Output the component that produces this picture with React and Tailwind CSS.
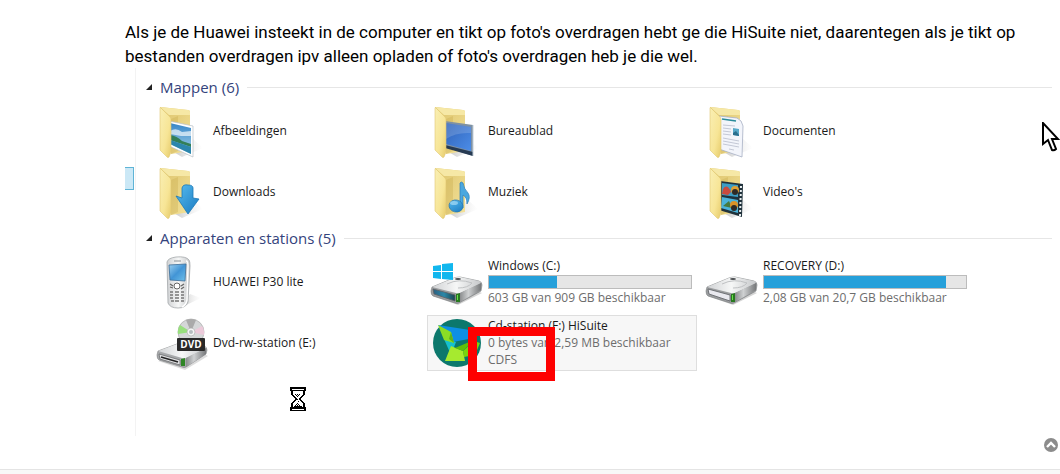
import React, { useState } from "react";

const folders = [
  { name: "Afbeeldingen", icon: PicturesIcon },
  { name: "Bureaublad", icon: DesktopIcon },
  { name: "Documenten", icon: DocumentsIcon },
  { name: "Downloads", icon: DownloadsIcon },
  { name: "Muziek", icon: MusicIcon },
  { name: "Video's", icon: VideosIcon },
];

const devices = [
  { name: "HUAWEI P30 lite", icon: PhoneIcon },
  {
    name: "Windows (C:)",
    icon: WindowsDriveIcon,
    info: "603 GB van 909 GB beschikbaar",
    free: 603,
    size: 909,
  },
  {
    name: "RECOVERY (D:)",
    icon: DriveIcon,
    info: "2,08 GB van 20,7 GB beschikbaar",
    free: 2.08,
    size: 20.7,
  },
  { name: "Dvd-rw-station (E:)", icon: DvdIcon },
  {
    name: "Cd-station (F:) HiSuite",
    icon: HiSuiteIcon,
    info: "0 bytes van 2,59 MB beschikbaar",
    fs: "CDFS",
    selected: true,
  },
];

function Icon({ children }) {
  return (
    <svg viewBox="0 0 56 56" className="h-14 w-14 shrink-0" aria-hidden="true">
      {children}
    </svg>
  );
}

function Folder({ children }) {
  return (
    <Icon>
      <path d="M30 54 L51 45 L41 36 L20 48Z" fill="url(#shadow)" />
      <path d="M8 4 L36 7 Q38 7 38 9 V48 L19 51Z" fill="url(#folderBack)" />
      <path d="M8 4 L36 7 Q38 7 38 9 V12 L17 12Z" fill="#f6e8a6" />
      <path d="M19 16 L26 13 V48 L19 51Z" fill="#c9ab4c" opacity="0.35" />
      {children}
      <path
        d="M8 5 Q8 4 9 5 L18 14 Q19 15 19 17 V49 L17 54 Q16 55 15 54 L8 47Z"
        fill="url(#folderFront)"
        stroke="#e0c873"
        strokeWidth="0.6"
      />
    </Icon>
  );
}

function PicturesIcon() {
  return (
    <Folder>
      <path d="M17 18 L41 23 V54 L17 43Z" fill="#fff" stroke="#b9c0c6" strokeWidth="0.7" />
      <path d="M18 20 L39 25 V51 L18 41Z" fill="url(#photo)" />
      <path d="M18 28 Q24 24 30 29 L39 28 V33 L29 33 L18 31Z" fill="#fff" opacity="0.65" />
      <path d="M18 32 Q25 33 30 38 L39 41 V44 L18 37Z" fill="#337f58" />
      <path d="M18 37 L39 44 V51 L18 41Z" fill="#2c86ad" />
    </Folder>
  );
}

function DesktopIcon() {
  return (
    <Folder>
      <path d="M18 18 L46 22 V53 L18 44Z" fill="#7f91a3" />
      <path d="M18 42 L46 49 V53 L18 45Z" fill="#263a52" />
      <path d="M19 20 L44 24 V48 L19 41Z" fill="url(#screen)" />
      <path d="M19 20 L44 24 V30 Q29 29 19 36Z" fill="#fff" opacity="0.16" />
      <path d="M46 22 V53" stroke="#c3ced8" strokeWidth="1" />
    </Folder>
  );
}

function DocumentsIcon() {
  return (
    <Folder>
      <path
        d="M17 13 L35 15 Q40 17 41 23 L40 54 L17 46Z"
        fill="#f3f5fb"
        stroke="#a7b0c4"
        strokeWidth="0.8"
      />
      <path d="M20 16 L34 18" stroke="#2b8b9b" strokeWidth="1.4" />
      <path d="M31 25 L37 26 V33 L31 32Z" fill="#58a9c9" />
      <path d="M31 30 L34 28 L37 32 V33 L31 32Z" fill="#2a6f8e" />
      <path
        d="M21 22 L33 23 M21 25 L29 26 M21 28 L29 29 M21 31 L29 32 M21 35 L37 38 M21 38 L37 41 M21 41 L37 44 M27 46 L32 47"
        stroke="#b7bccb"
        strokeWidth="0.8"
      />
    </Folder>
  );
}

function DownloadsIcon() {
  return (
    <Folder>
      <path
        d="M30 24 Q31 20 36 21 Q41 21 41 24 L41 34 L47 35 L36 50 L24 32 L30 34Z"
        fill="url(#arrow)"
        stroke="#1b78b7"
        strokeWidth="0.8"
      />
    </Folder>
  );
}

function MusicIcon() {
  return (
    <Folder>
      <path
        d="M33 19 Q34 17 36 19 Q37 25 41 29 Q44 33 40 40 Q40 33 36 31 L36 44 L33 42Z"
        fill="#4aa7df"
        stroke="#2b7db8"
        strokeWidth="0.7"
      />
      <ellipse
        cx="29"
        cy="42"
        rx="7"
        ry="6"
        transform="rotate(12 29 42)"
        fill="url(#arrow)"
        stroke="#2676b1"
        strokeWidth="0.7"
      />
      <ellipse cx="27" cy="39" rx="4" ry="2" fill="#b5e2f8" opacity="0.6" />
    </Folder>
  );
}

function VideosIcon() {
  return (
    <Folder>
      <path d="M18 17 L41 20 L40 53 L17 46Z" fill="#20323c" />
      <path d="M20 19 L36 21 V33 L20 31Z" fill="#3c9dc4" />
      <path d="M20 33 L36 36 V49 L19 44Z" fill="#4bb3da" />
      <path d="M21 25 Q25 19 29 28 L26 31 L20 30Z" fill="#c94a3e" />
      <circle cx="33" cy="26" r="4" fill="#e0a032" />
      <circle cx="33" cy="28" r="3" fill="#2e2a26" />
      <path d="M21 42 L27 37 L30 44Z" fill="#477a3d" />
      <circle cx="32" cy="41" r="4" fill="#db9328" />
      <circle cx="32" cy="44" r="3" fill="#2e2a26" />
      <path d="M39 22 L38 52" stroke="#e8eef0" strokeWidth="2" strokeDasharray="2 2" />
    </Folder>
  );
}

function PhoneIcon() {
  return (
    <Icon>
      <path d="M28 54 L49 44 L38 40Z" fill="url(#shadow)" />
      <path
        d="M15 8 Q16 4 24 3 Q34 2 37 6 Q38 7 38 12 L36 48 Q34 54 26 54 Q18 54 16 49Z"
        fill="url(#metal)"
        stroke="#a5a8ab"
        strokeWidth="0.8"
      />
      <path d="M34 7 Q36 7 36 12 L35 46 Q34 51 30 53" fill="none" stroke="#fff" strokeWidth="1.4" />
      <path d="M22 7 H29" stroke="#8e9497" strokeWidth="1" />
      <path d="M17 11 L34 10 L33 27 L18 26Z" fill="url(#photoScreen)" stroke="#3d6d98" strokeWidth="0.8" />
      <circle cx="25" cy="32" r="3" fill="#fff" stroke="#666" />
      <path d="M18 30 L21 32 M18 33 L21 34 M29 32 L32 30 M29 35 L32 33" stroke="#666" strokeWidth="1.3" />
      <path
        d="M18 38 H21 M23 38 H27 M29 38 H32 M18 41 H21 M23 41 H27 M29 41 H32 M18 44 H21 M23 44 H27 M29 44 H32 M19 47 H22 M23 47 H27 M29 47 H32"
        stroke="#777"
        strokeWidth="1.6"
      />
    </Icon>
  );
}

function DriveBody({ front = "#e9e9ef" }) {
  return (
    <>
      <path d="M6 42 L31 51 L55 39 L50 37Z" fill="#555" opacity="0.25" />
      <path
        d="M5 33 L27 24 Q30 23 33 23 L52 27 Q55 28 55 31 L54 37 L32 49 Q30 50 28 49 L6 42 Q4 41 4 37Z"
        fill="#9b9d9f"
        stroke="#7b7d7f"
        strokeWidth="0.6"
      />
      <path d="M5 33 L27 24 Q30 23 33 23 L52 27 Q55 28 53 30 L33 39 Q31 40 29 39Z" fill="url(#metal)" />
      <path d="M33 39 L54 29 L54 36 L33 48Z" fill="url(#side)" />
      <path d="M20 30 Q32 24 45 29 Q41 34 31 34" fill="none" stroke="#bfc1c3" strokeWidth="1" />
      <ellipse cx="31" cy="25" rx="3" ry="1" fill="#4c4f52" />
      <path d="M6 35 L28 41 V47 L7 40Z" fill={front} stroke="#5c6063" strokeWidth="0.8" />
      <path d="M29 40 L33 39 V48 L29 48Z" fill="#287a20" />
      <path d="M30 41 L31 41 V46 L30 46Z" fill="#68e04b" />
    </>
  );
}

function DriveIcon() {
  return (
    <Icon>
      <DriveBody />
    </Icon>
  );
}

function WindowsDriveIcon() {
  return (
    <Icon>
      <DriveBody front="url(#driveFront)" />
      <path d="M6 12 L14 11 V17 H6Z M15 10 L26 9 V17 H15Z M6 18 H14 V25 L6 24Z M15 18 H26 V26 L15 25Z" fill="#12b7ee" />
    </Icon>
  );
}

function DvdIcon() {
  return (
    <Icon>
      <path d="M6 46 L33 55 L56 41 L50 38Z" fill="#555" opacity="0.2" />
      <path
        d="M6 36 L25 29 L52 31 Q55 32 55 35 L54 39 L34 52 Q32 53 30 52 L7 45 Q5 44 5 40Z"
        fill="#a7a9ab"
        stroke="#7e8082"
        strokeWidth="0.6"
      />
      <path d="M6 36 L25 29 L52 31 Q55 32 53 34 L34 43 Q32 44 30 43Z" fill="url(#metal)" />
      <path d="M34 43 L54 33 L54 39 L34 52Z" fill="url(#side)" />
      <path d="M7 39 L28 45 V50 L8 44Z" fill="#e1e2e4" stroke="#5e6062" strokeWidth="0.7" />
      <path d="M9 42 L26 47" stroke="#222" strokeWidth="1.6" />
      <path d="M29 44 L33 43 V51 L29 51Z" fill="#2e8525" />
      <circle cx="39" cy="17" r="13" fill="#d5d7d8" stroke="#aaa" strokeWidth="0.7" />
      <path d="M39 17 L28 10 A13 13 0 0 0 26 19Z" fill="#98df7e" />
      <path d="M39 17 L34 5 A13 13 0 0 1 44 5Z" fill="#aaa" />
      <path d="M39 17 L50 11 A13 13 0 0 1 52 20Z" fill="#eccada" />
      <circle cx="39" cy="17" r="4" fill="#f4f5f5" stroke="#aaa" strokeWidth="0.6" />
      <circle cx="39" cy="17" r="2" fill="#b5bdc0" />
      <rect x="25" y="23" width="28" height="13" rx="1" fill="#292929" />
      <text
        x="39"
        y="33"
        textAnchor="middle"
        fill="#fff"
        fontFamily="Open Sans, sans-serif"
        fontSize="10"
        fontWeight="700"
      >
        DVD
      </text>
    </Icon>
  );
}

function HiSuiteIcon() {
  return (
    <Icon>
      <circle cx="30" cy="28" r="24" fill="#0c786c" />
      <path d="M11 10 L43 15 L47 23 L26 27Z" fill="#0d8fe4" />
      <path d="M17 24 L29 27 L24 40Z" fill="#15c0cf" />
      <path d="M11 10 L24 17 L27 28 L17 25Z" fill="#8bdd25" />
      <path d="M24 17 L27 28 L22 24Z" fill="#5fb319" />
      <path d="M24 31 L36 36 L38 46 L18 46Z" fill="#a6ea2f" />
      <path d="M36 36 L47 26 L53 28 L48 40 L37 42Z" fill="#78d40d" />
      <path d="M28 33 L47 25 L36 36Z" fill="#5fc008" />
    </Icon>
  );
}

// gradients shared by all icons
function IconDefs() {
  return (
    <svg width="0" height="0" className="absolute" aria-hidden="true">
      <defs>
        <linearGradient id="folderFront" x1="0" y1="0" x2="1" y2="1">
          <stop offset="0" stopColor="#f9efb4" />
          <stop offset="0.6" stopColor="#f7e596" />
          <stop offset="1" stopColor="#e6cb6b" />
        </linearGradient>
        <linearGradient id="folderBack" x1="0" y1="0" x2="1" y2="1">
          <stop offset="0" stopColor="#dcc36a" />
          <stop offset="1" stopColor="#f4e29a" />
        </linearGradient>
        <linearGradient id="shadow" x1="0" y1="0" x2="1" y2="0">
          <stop offset="0" stopColor="#888" stopOpacity="0.5" />
          <stop offset="1" stopColor="#ccc" stopOpacity="0" />
        </linearGradient>
        <linearGradient id="photo" x1="0" y1="0" x2="0" y2="1">
          <stop offset="0" stopColor="#3585c8" />
          <stop offset="1" stopColor="#a8d5ea" />
        </linearGradient>
        <linearGradient id="photoScreen" x1="0" y1="0" x2="1" y2="1">
          <stop offset="0" stopColor="#9dd0f0" />
          <stop offset="0.5" stopColor="#4295d6" />
          <stop offset="1" stopColor="#6fc0ea" />
        </linearGradient>
        <linearGradient id="screen" x1="0" y1="0" x2="1" y2="1">
          <stop offset="0" stopColor="#2f62b8" />
          <stop offset="1" stopColor="#4c8de8" />
        </linearGradient>
        <linearGradient id="arrow" x1="0" y1="0" x2="1" y2="1">
          <stop offset="0" stopColor="#57bdf0" />
          <stop offset="1" stopColor="#1a79c0" />
        </linearGradient>
        <linearGradient id="metal" x1="0" y1="0" x2="1" y2="0">
          <stop offset="0" stopColor="#d0d2d4" />
          <stop offset="0.5" stopColor="#f6f7f7" />
          <stop offset="1" stopColor="#c6c8ca" />
        </linearGradient>
        <linearGradient id="side" x1="0" y1="0" x2="1" y2="0">
          <stop offset="0" stopColor="#8b8d8f" />
          <stop offset="0.4" stopColor="#cfd1d2" />
          <stop offset="1" stopColor="#77797b" />
        </linearGradient>
        <linearGradient id="driveFront" x1="0" y1="0" x2="1" y2="0">
          <stop offset="0" stopColor="#2c5f80" />
          <stop offset="0.5" stopColor="#2b88a8" />
          <stop offset="1" stopColor="#1c4650" />
        </linearGradient>
      </defs>
    </svg>
  );
}

function Item({ item }) {
  const ItemIcon = item.icon;
  const used = item.size ? ((item.size - item.free) / item.size) * 100 : 0;

  return (
    <li className="relative">
      <button
        type="button"
        className={
          item.selected
            ? "flex h-14 w-full items-center gap-[5px] bg-[#f7f7f7] text-left outline outline-1 -outline-offset-1 outline-[#dedede]"
            : "flex h-14 w-full items-center gap-[5px] text-left"
        }
      >
        <ItemIcon />
        <span className="flex min-w-0 flex-1 flex-col gap-px pr-[5px] text-[12px] leading-4 text-[#1a1a1a]">
          <span>{item.name}</span>
          {item.size && (
            <span className="block h-[14px] border border-[#bcbcbc] bg-[#e6e6e6]">
              <span className="block h-full bg-[#26a0da]" style={{ width: `${used}%` }} />
            </span>
          )}
          {item.info && <span className="text-[#6d6d6d]">{item.info}</span>}
          {item.fs && <span className="text-[#6d6d6d]">{item.fs}</span>}
        </span>
      </button>
      {item.selected && (
        <div className="pointer-events-none absolute top-3 left-[41px] h-[54px] w-[87px] border-[9px] border-[#fe0000]" />
      )}
    </li>
  );
}

function Group({ title, items }) {
  const [open, setOpen] = useState(true);

  return (
    <section>
      <h2 className="flex h-5 items-center gap-2">
        <button
          type="button"
          aria-expanded={open}
          onClick={() => setOpen(!open)}
          className="flex items-center gap-2 text-[15px] leading-5 text-[#34437c]"
        >
          <svg viewBox="0 0 6 6" className="h-[6px] w-[6px]" aria-hidden="true">
            <path d="M6 0 V6 H0Z" fill="#222" />
          </svg>
          {title} ({items.length})
        </button>
        <span className="h-px flex-1 bg-[#e6e6e6]" />
      </h2>
      {open && (
        <ul className="mt-[6px] grid grid-cols-[repeat(auto-fill,270px)] gap-[5px] pl-[6px]">
          {items.map((item) => (
            <Item key={item.name} item={item} />
          ))}
        </ul>
      )}
    </section>
  );
}

function Hourglass() {
  return (
    <svg
      viewBox="0 0 16 24"
      className="absolute top-[319px] left-[165px] h-6 w-4"
      shapeRendering="crispEdges"
      aria-hidden="true"
    >
      <path d="M2 3 H14 V7 L10 12 L14 17 V21 H2 V17 L6 12 L2 7Z" fill="#fff" stroke="#000" strokeWidth="1.5" />
      <path d="M0 0 H16 V4 H0Z M0 20 H16 V24 H0Z" fill="#000" />
      <path d="M2 2 H14 M2 22 H14" stroke="#fff" strokeWidth="1" />
      <path
        d="M5 7 H6 M7 7 H8 M9 7 H10 M6 8 H7 M8 8 H9 M7 9 H8 M7 12 H8 M8 14 H9 M7 16 H8 M6 17 H7 M8 17 H9 M5 18 H6 M7 18 H8 M9 18 H10 M4 19 H12"
        transform="translate(0 0.5)"
        stroke="#000"
        strokeWidth="1"
      />
    </svg>
  );
}

function Pointer() {
  return (
    <svg
      viewBox="0 0 18 30"
      className="pointer-events-none absolute top-[122px] right-0 h-[30px] w-[18px]"
      aria-hidden="true"
    >
      <path
        d="M1 1 V22 L6 18 L10 28 Q12 29 14 27 L10 17 H16Z"
        fill="#fff"
        stroke="#000"
        strokeWidth="2"
      />
    </svg>
  );
}

export default function App() {
  return (
    <div className="relative flex min-h-screen flex-col bg-white">
      <IconDefs />
      <main className="flex-1 pt-5 pr-2 pl-[125px]">
        <p className="font-[Roboto,sans-serif] text-[17px] leading-6 text-black">
          Als je de Huawei insteekt in de computer en tikt op foto's overdragen
          hebt ge die HiSuite niet, daarentegen als je tikt op bestanden
          overdragen ipv alleen opladen of foto's overdragen heb je die wel.
        </p>

        <div className="relative flex font-['Open_Sans',sans-serif]">
          <div className="w-[11px] border-r border-[#f3f3f3] pt-[99px]">
            <div className="h-[23px] w-[9px] border border-l-0 border-[#5fb4d6] bg-[#cbe8f6]" />
          </div>
          <div className="flex flex-1 flex-col gap-2 pt-[9px] pb-[65px] pl-[10px]">
            <Group title="Mappen" items={folders} />
            <Group title="Apparaten en stations" items={devices} />
          </div>
          <Hourglass />
        </div>
      </main>

      <footer className="h-[5px] border-t border-[#e4e4e4] bg-[#f8f8f8]" />

      <button
        type="button"
        aria-label="Naar boven"
        className="fixed right-[2px] bottom-[22px] flex h-[14px] w-[14px] items-center justify-center rounded-full bg-[#8c8c8c]"
      >
        <svg viewBox="0 0 10 10" className="h-[10px] w-[10px]" aria-hidden="true">
          <path d="M1 7 L5 3 L9 7" fill="none" stroke="#fff" strokeWidth="2.4" />
        </svg>
      </button>
      <Pointer />
    </div>
  );
}
